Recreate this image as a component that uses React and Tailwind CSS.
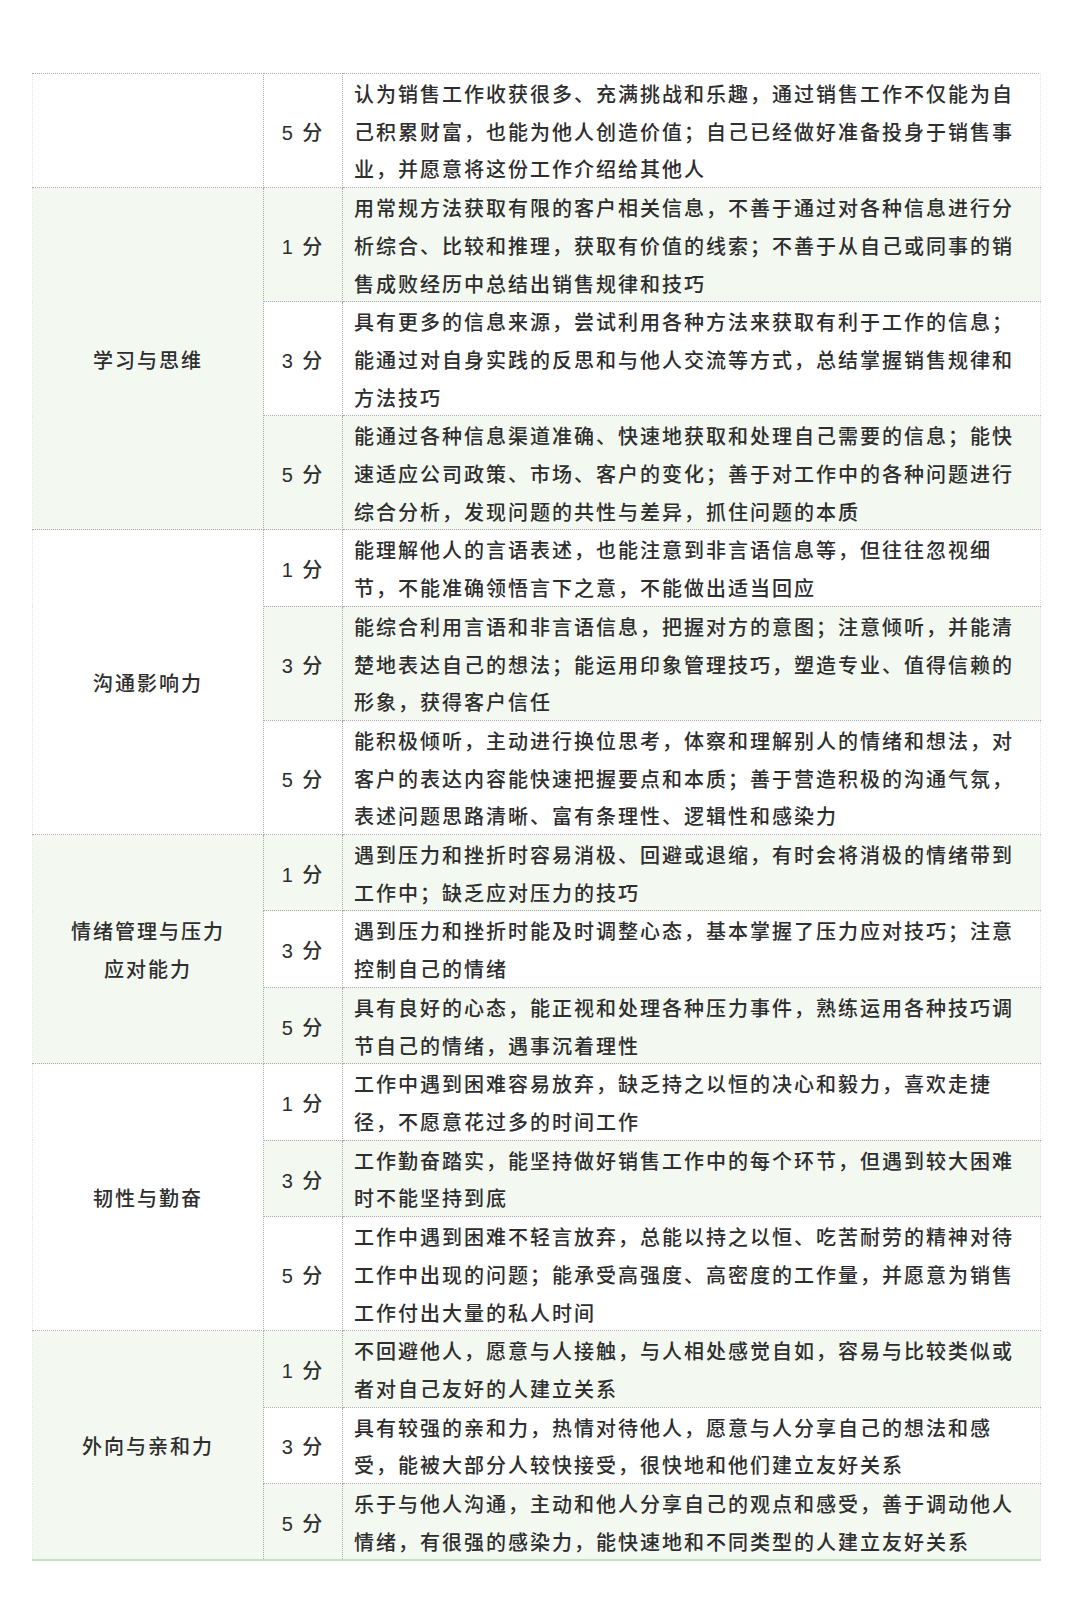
import React from 'react';

// 评分标准表（续）
const groups = [
  {
    name: [],
    rows: [
      {
        score: 5,
        lines: [
          '认为销售工作收获很多、充满挑战和乐趣，通过销售工作不仅能为自',
          '己积累财富，也能为他人创造价值；自己已经做好准备投身于销售事',
          '业，并愿意将这份工作介绍给其他人',
        ],
      },
    ],
  },
  {
    name: ['学习与思维'],
    rows: [
      {
        score: 1,
        lines: [
          '用常规方法获取有限的客户相关信息，不善于通过对各种信息进行分',
          '析综合、比较和推理，获取有价值的线索；不善于从自己或同事的销',
          '售成败经历中总结出销售规律和技巧',
        ],
      },
      {
        score: 3,
        lines: [
          '具有更多的信息来源，尝试利用各种方法来获取有利于工作的信息；',
          '能通过对自身实践的反思和与他人交流等方式，总结掌握销售规律和',
          '方法技巧',
        ],
      },
      {
        score: 5,
        lines: [
          '能通过各种信息渠道准确、快速地获取和处理自己需要的信息；能快',
          '速适应公司政策、市场、客户的变化；善于对工作中的各种问题进行',
          '综合分析，发现问题的共性与差异，抓住问题的本质',
        ],
      },
    ],
  },
  {
    name: ['沟通影响力'],
    rows: [
      {
        score: 1,
        lines: [
          '能理解他人的言语表述，也能注意到非言语信息等，但往往忽视细',
          '节，不能准确领悟言下之意，不能做出适当回应',
        ],
      },
      {
        score: 3,
        lines: [
          '能综合利用言语和非言语信息，把握对方的意图；注意倾听，并能清',
          '楚地表达自己的想法；能运用印象管理技巧，塑造专业、值得信赖的',
          '形象，获得客户信任',
        ],
      },
      {
        score: 5,
        lines: [
          '能积极倾听，主动进行换位思考，体察和理解别人的情绪和想法，对',
          '客户的表达内容能快速把握要点和本质；善于营造积极的沟通气氛，',
          '表述问题思路清晰、富有条理性、逻辑性和感染力',
        ],
      },
    ],
  },
  {
    name: ['情绪管理与压力', '应对能力'],
    rows: [
      {
        score: 1,
        lines: [
          '遇到压力和挫折时容易消极、回避或退缩，有时会将消极的情绪带到',
          '工作中；缺乏应对压力的技巧',
        ],
      },
      {
        score: 3,
        lines: [
          '遇到压力和挫折时能及时调整心态，基本掌握了压力应对技巧；注意',
          '控制自己的情绪',
        ],
      },
      {
        score: 5,
        lines: [
          '具有良好的心态，能正视和处理各种压力事件，熟练运用各种技巧调',
          '节自己的情绪，遇事沉着理性',
        ],
      },
    ],
  },
  {
    name: ['韧性与勤奋'],
    rows: [
      {
        score: 1,
        lines: [
          '工作中遇到困难容易放弃，缺乏持之以恒的决心和毅力，喜欢走捷',
          '径，不愿意花过多的时间工作',
        ],
      },
      {
        score: 3,
        lines: [
          '工作勤奋踏实，能坚持做好销售工作中的每个环节，但遇到较大困难',
          '时不能坚持到底',
        ],
      },
      {
        score: 5,
        lines: [
          '工作中遇到困难不轻言放弃，总能以持之以恒、吃苦耐劳的精神对待',
          '工作中出现的问题；能承受高强度、高密度的工作量，并愿意为销售',
          '工作付出大量的私人时间',
        ],
      },
    ],
  },
  {
    name: ['外向与亲和力'],
    rows: [
      {
        score: 1,
        lines: [
          '不回避他人，愿意与人接触，与人相处感觉自如，容易与比较类似或',
          '者对自己友好的人建立关系',
        ],
      },
      {
        score: 3,
        lines: [
          '具有较强的亲和力，热情对待他人，愿意与人分享自己的想法和感',
          '受，能被大部分人较快接受，很快地和他们建立友好关系',
        ],
      },
      {
        score: 5,
        lines: [
          '乐于与他人沟通，主动和他人分享自己的观点和感受，善于调动他人',
          '情绪，有很强的感染力，能快速地和不同类型的人建立友好关系',
        ],
      },
    ],
  },
];

const cell = 'border border-dotted border-[#a9a9a9] p-0 align-middle';

export default function App() {
  let rowIndex = 0;

  return (
    <div
      className="w-[1080px] h-[1610px] bg-white pt-[73px] text-[#2e2e2e] text-[20px] font-medium leading-[37.7px] tracking-[2px]"
      style={{ fontFamily: '"Liberation Sans", "Noto Sans CJK SC", sans-serif' }}
    >
      <table className="ml-[32px] w-[1009px] table-fixed border-collapse border-b-2 border-b-[#c9dfc3]">
        <colgroup>
          <col className="w-[231px]" />
          <col className="w-[79px]" />
          <col />
        </colgroup>
        <tbody>
          {groups.map((group, gi) =>
            group.rows.map((row, ri) => {
              const green = rowIndex % 2 === 1;
              const groupGreen = (rowIndex - ri) % 2 === 1;
              rowIndex++;
              const isLast = gi === groups.length - 1 && ri === group.rows.length - 1;
              return (
                <tr key={`${gi}-${ri}`}>
                  {ri === 0 && (
                    <td
                      rowSpan={group.rows.length}
                      className={`${cell} border-l-[#e6e6e6] text-center ${groupGreen ? 'bg-[#f3f8f1]' : 'bg-white'} ${gi === groups.length - 1 ? 'border-b-0' : ''}`}
                    >
                      <div className="relative top-[3px]">
                        {group.name.map((n) => (
                          <div key={n}>{n}</div>
                        ))}
                      </div>
                    </td>
                  )}
                  <td className={`${cell} text-center ${green ? 'bg-[#f3f8f1]' : 'bg-white'} ${isLast ? 'border-b-0' : ''}`}>
                    <div className="relative top-[3px]">{row.score} 分</div>
                  </td>
                  <td
                    className={`${cell} border-r-[#e6e6e6] pl-[11px] ${green ? 'bg-[#f3f8f1]' : 'bg-white'} ${isLast ? 'border-b-0' : ''}`}
                  >
                    <div className="relative top-[3px]">
                      {row.lines.map((line) => (
                        <div key={line} className="whitespace-nowrap">
                          {line}
                        </div>
                      ))}
                    </div>
                  </td>
                </tr>
              );
            })
          )}
        </tbody>
      </table>
    </div>
  );
}
